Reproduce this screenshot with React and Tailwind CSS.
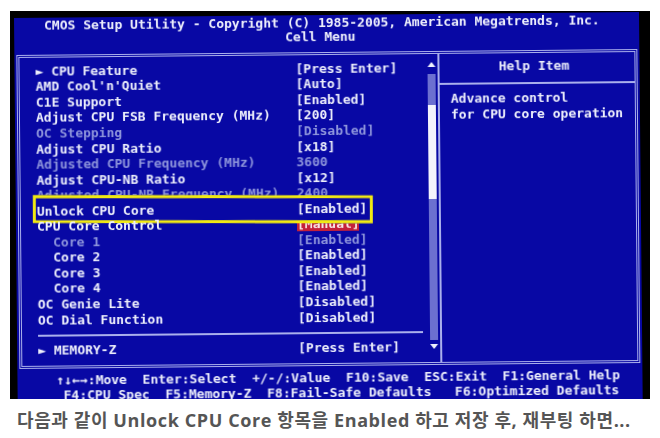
const rows = [
  { l: "► CPU Feature", v: "[Press Enter]" },
  { l: "AMD Cool'n'Quiet", v: "[Auto]" },
  { l: "C1E Support", v: "[Enabled]" },
  { l: "Adjust CPU FSB Frequency (MHz)", v: "[200]" },
  { l: "OC Stepping", v: "[Disabled]", dim: true },
  { l: "Adjust CPU Ratio", v: "[x18]" },
  { l: "Adjusted CPU Frequency (MHz)", v: "3600", dim: true },
  { l: "Adjust CPU-NB Ratio", v: "[x12]" },
  { l: "Adjusted CPU-NB Frequency (MHz)", v: "2400", dim: true },
  { l: "Unlock CPU Core", v: "[Enabled]", box: true },
  { l: "CPU Core Control", v: "[Manual]", red: true },
  { l: "Core 1", v: "[Enabled]", dim: true, sub: true },
  { l: "Core 2", v: "[Enabled]", sub: true },
  { l: "Core 3", v: "[Enabled]", sub: true },
  { l: "Core 4", v: "[Enabled]", sub: true },
  { l: "OC Genie Lite", v: "[Disabled]" },
  { l: "OC Dial Function", v: "[Disabled]" },
];

function Row({ r }) {
  const color = r.dim ? "text-[#8f96dc]" : "text-[#eef0fc]";
  return (
    <div className={`flex h-[15.55px] items-center whitespace-pre ${color}`}>
      {r.box && (
        <div className="absolute left-[-4px] w-[340px] h-[28px] border-[3px] border-[#f2ea12] bg-[#0808a4] rotate-[0.55deg]" />
      )}
      <span className={`relative w-[260px] ${r.sub ? "pl-[16px]" : ""}`}>{r.l}</span>
      {r.red ? (
        <span className="bg-[#c4203a] w-[62px] text-[#f8e4e6]">{r.v}</span>
      ) : (
        <span className="relative">{r.v}</span>
      )}
    </div>
  );
}

export default function App() {
  return (
    <div className="w-[660px] h-[438px] bg-white overflow-hidden" style={{ fontFamily: '"DejaVu Sans Mono", monospace' }}>
      <div className="ml-[10px] mt-[11px] w-[640px] h-[388px] bg-black overflow-hidden pl-[4px] pt-[7px]">
        <div className="origin-top-left rotate-[-0.55deg] w-[625px] h-[400px] pl-[1px] bg-[#0808a4] font-bold text-[13px] leading-[15px] text-[#eef0fc] blur-[0.35px]">
          <div className="pl-[29px] whitespace-pre h-[14px] flex items-center">
            CMOS Setup Utility - Copyright (C) 1985-2005, American Megatrends, Inc.
          </div>
          <div className="pl-[270px] h-[15px]">Cell Menu</div>
          <div className="ml-[1px] mt-[8px] w-[621px] h-[314px] border-[3px] border-double border-[#aab0ec] flex">
            <div className="w-[418px] shrink-0 pl-[16px] pt-[5.5px] flex">
              <div className="w-[385px] relative">
                {rows.map((r) => <Row key={r.l} r={r} />)}
                <div className="mt-[7px] h-[2px] bg-[#aab0ec]" />
                <div className="mt-[6px] flex h-[15.6px] items-center whitespace-pre">
                  <span className="w-[260px]">► MEMORY-Z</span>
                  <span>[Press Enter]</span>
                </div>
              </div>
              <div className="ml-[7px] w-[8px] flex flex-col items-center">
                <div className="h-[10px] flex items-center">
                  <div className="w-0 h-0 border-x-[4px] border-x-transparent border-b-[5px] border-b-[#eef0fc]" />
                </div>
                <div className="w-[8px] mt-[4px] h-[31px] bg-[#6c70d0]" />
                <div className="w-[8px] h-[94px] bg-[#f4f4fc]" />
                <div className="w-[8px] h-[141px] bg-[#6c70d0]" />
                <div className="h-[10px] mt-[2px] flex items-center">
                  <div className="w-0 h-0 border-x-[4px] border-x-transparent border-t-[5px] border-t-[#eef0fc]" />
                </div>
              </div>
            </div>
            <div className="flex-1 border-l-2 border-[#aab0ec]">
              <div className="h-[31px] border-b-2 border-[#aab0ec] flex items-center justify-center pr-[6px] pb-[4px]">Help Item</div>
              <div className="pl-[11px] pt-[6px] leading-[15.5px] whitespace-pre">
                <div>Advance control</div>
                <div>for CPU core operation</div>
              </div>
            </div>
          </div>
          <div className="mt-[4px] pl-[38px] whitespace-pre h-[15px]">↑↓←→:Move  Enter:Select  +/-/:Value  F10:Save  ESC:Exit  F1:General Help</div>
          <div className="pl-[45px] whitespace-pre h-[16px]">F4:CPU Spec  F5:Memory-Z  F8:Fail-Safe Defaults   F6:Optimized Defaults</div>
        </div>
      </div>
      <div className="pl-[17px] pt-[11px] text-[18px] leading-[20px] tracking-[0.6px] font-bold text-[#555555] whitespace-pre" style={{ fontFamily: '"Open Sans", "Noto Sans CJK KR", sans-serif' }}>
        다음과 같이 Unlock CPU Core 항목을 Enabled 하고 저장 후, 재부팅 하면...
      </div>
    </div>
  );
}
